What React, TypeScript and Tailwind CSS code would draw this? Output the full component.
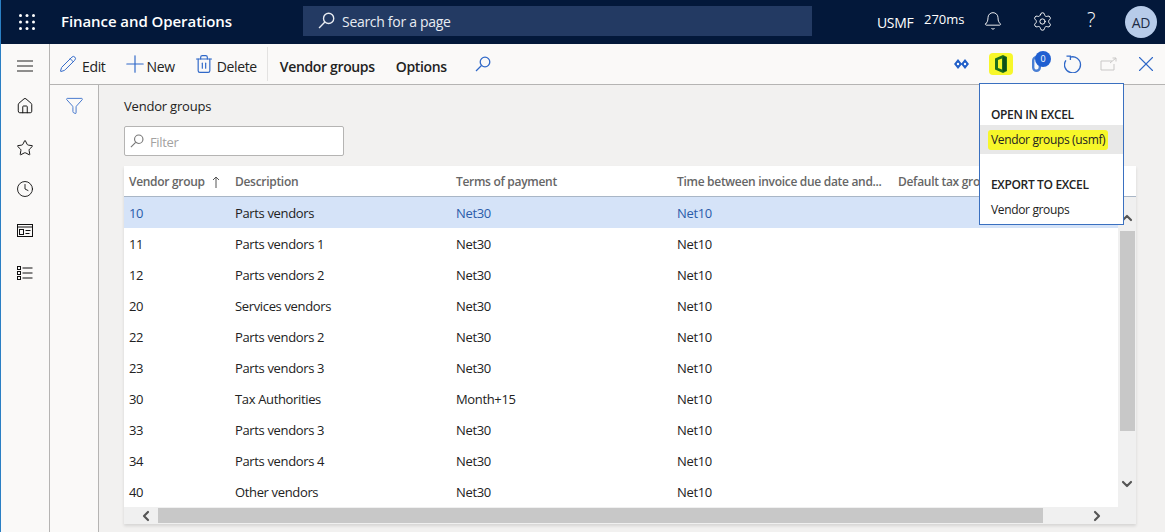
import React from "react";
import { ChevronUp, ChevronDown, ChevronLeft, ChevronRight, Star, Clock, Bell, Settings, Home, Filter, Pencil, Plus, Trash2, X } from "lucide-react";

const rows = [
  ["10", "Parts vendors", "Net30", "Net10"],
  ["11", "Parts vendors 1", "Net30", "Net10"],
  ["12", "Parts vendors 2", "Net30", "Net10"],
  ["20", "Services vendors", "Net30", "Net10"],
  ["22", "Parts vendors 2", "Net30", "Net10"],
  ["23", "Parts vendors 3", "Net30", "Net10"],
  ["30", "Tax Authorities", "Month+15", "Net10"],
  ["33", "Parts vendors 3", "Net30", "Net10"],
  ["34", "Parts vendors 4", "Net30", "Net10"],
  ["40", "Other vendors", "Net30", "Net10"],
];

const font = "[font-family:'Open_Sans',sans-serif]";
const blue = "#2f68c8";

function Waffle() {
  return (
    <svg width="16" height="16" viewBox="0 0 16 16" fill="#fff">
      {[1.5, 8, 14.5].map((y) => [1.5, 8, 14.5].map((x) => <circle key={`${x}-${y}`} cx={x} cy={y} r="1.5" />))}
    </svg>
  );
}

function Lens({ size, color, sw = 1.3 }: { size: number; color: string; sw?: number }) {
  return (
    <svg width={size} height={size} viewBox="0 0 16 16" fill="none" stroke={color} strokeWidth={sw}>
      <circle cx="10" cy="6" r="4.8" />
      <path d="M6.5 9.5 L1 15" />
    </svg>
  );
}

function Cell({ w, children, cls = "" }: { w: string; children: React.ReactNode; cls?: string }) {
  return <div className={`${w} shrink-0 pl-[5px] truncate ${cls}`}>{children}</div>;
}

export default function App() {
  return (
    <div className={`relative w-[1165px] h-[532px] overflow-hidden flex flex-col bg-[#f2f1f0] text-[13px] text-[#222] border-l border-l-[#2a7fc4] ${font} tracking-[-0.35px]`}>
      {/* Top bar */}
      <header className="h-[44px] shrink-0 bg-[#03183a] text-white flex items-center">
        <div className="w-[50px] flex justify-center pl-[1px]"><Waffle /></div>
        <div className="w-[252px] pl-[10px] mt-[-2px] text-[15px] font-semibold tracking-[-0.07px]">Finance and Operations</div>
        <div className="w-[509px] h-[30px] bg-[#233a63] flex items-center pl-[15px] gap-[7px] text-[14px] mt-[-3px] text-[#e8ecf2] tracking-[-0.3px]">
          <Lens size={17} color="#e8ecf2" />
          <span className="pt-[2px]">Search for a page</span>
        </div>
        <div className="flex items-center ml-[65px]">
          <span className="text-[14px] w-[47px]">USMF</span>
          <span className="text-[13px] w-[59px] mt-[-4px] tracking-[0px]">270ms</span>
          <Bell size={20} strokeWidth={1.1} className="mt-[-2px]" />
          <Settings size={21} strokeWidth={1.1} className="ml-[29px] mt-[-2px]" />
          <span className="ml-[30px] mt-[-4px] w-[16px] text-center text-[20px] font-light">?</span>
          <div className="ml-[26px] w-[32px] h-[32px] rounded-full bg-[#b7cbe9] text-[#1d2b45] text-[14px] flex items-center justify-center">AD</div>
        </div>
      </header>

      <div className="flex-1 flex min-h-0">
        {/* Nav rail */}
        <nav className="w-[49px] shrink-0 bg-[#faf9f8] border-r border-r-[#b5b4b3] flex flex-col items-center pt-[16px] text-[#111]">
          <svg width="18" height="12" viewBox="0 0 18 12" stroke="#222" strokeWidth="1"><path d="M1 1h16M1 6h16M1 11h16" /></svg>
          <Home size={18} strokeWidth={1.3} className="mt-[25px]" />
          <Star size={18} strokeWidth={1.3} className="mt-[24px]" />
          <Clock size={18} strokeWidth={1.2} className="mt-[23px]" />
          <svg width="16" height="14" viewBox="0 0 16 14" fill="none" stroke="#111" strokeWidth="1" className="mt-[26px]">
            <rect x="0.5" y="0.5" width="15" height="12" />
            <path d="M0.5 3h15" />
            <rect x="2.5" y="5.5" width="4" height="5" />
            <path d="M8.5 6.5h5M8.5 9.5h4" />
          </svg>
          <svg width="16" height="14" viewBox="0 0 16 14" fill="none" stroke="#111" strokeWidth="1" className="mt-[28px]">
            <rect x="0.5" y="0.5" width="3" height="3" />
            <rect x="0.5" y="5.5" width="3" height="3" />
            <rect x="0.5" y="10.5" width="3" height="3" />
            <path d="M5.5 2h10M5.5 7h10M5.5 12h10" />
          </svg>
        </nav>

        <div className="flex-1 flex flex-col min-w-0">
          {/* Toolbar */}
          <div className="h-[41px] shrink-0 bg-[#faf9f8] border-b border-b-[#b5b4b3] flex items-center text-[14px]">
            <div className="flex items-center h-[34px] border-r border-r-[#e3e2e1] pr-[10px] pl-[9px]">
              <Pencil size={18} strokeWidth={1.3} color={blue} />
              <span className="ml-[5px] mt-[4px]">Edit</span>
              <Plus size={28} strokeWidth={1} color={blue} className="ml-[16px]" />
              <span className="ml-[-3px] mt-[4px]">New</span>
              <Trash2 size={20} strokeWidth={1.4} color={blue} className="ml-[19px]" />
              <span className="ml-[3px] mt-[4px]">Delete</span>
            </div>
            <span className="ml-[12px] mt-[4px] font-semibold">Vendor groups</span>
            <span className="ml-[21px] mt-[4px] font-semibold">Options</span>
            <span className="ml-[28px]"><Lens size={16} color={blue} /></span>
            <div className="ml-auto flex items-center">
              <svg width="15" height="10" viewBox="0 0 15 10" fill="#2260c8">
                <path d="M4 0l4 5-4 5-4-5zM11 0l4 5-4 5-4-5z" />
                <circle cx="4" cy="5" r="1.2" fill="#fff" /><circle cx="11" cy="5" r="1.2" fill="#fff" />
              </svg>
              <div className="ml-[20px] w-[24px] h-[22px] bg-[#f7f72a] rounded-[4px] flex items-center justify-center">
                <svg width="14" height="18" viewBox="0 0 14 18">
                  <path d="M1 3.5l8-3.5 4 2v14l-4 2-8-3.5z" fill="#1c6e1c" />
                  <path d="M4 5l4-1.5v11L4 13z" fill="#f7f72a" />
                  <path d="M9 1.5l3 1v13l-3 1z" fill="#0f4f18" />
                </svg>
              </div>
              <div className="relative ml-[16px] w-[14px] h-[20px] flex items-center justify-center">
                <svg width="9" height="16" viewBox="0 0 9 16" fill="none" stroke="#4a7fd4" strokeWidth="2.4">
                  <rect x="1.2" y="1.2" width="6.6" height="13.6" rx="3.3" />
                </svg>
                <span className="absolute left-[6px] top-[-3px] w-[16px] h-[16px] rounded-full bg-[#1f5fd1] text-white text-[9px] flex items-center justify-center">0</span>
              </div>
              <svg width="18" height="18" viewBox="0 0 18 18" fill="none" stroke={blue} strokeWidth="1.3" className="ml-[21px]">
                <path d="M6 2.2A8 8 0 1 1 1.9 5.3" />
                <path d="M2.5 1.2h3.9v3.9" />
              </svg>
              <svg width="18" height="14" viewBox="0 0 18 14" fill="none" stroke="#c9c8c7" strokeWidth="1" className="ml-[18px]">
                <path d="M12 4H1v9h13V7" /><path d="M10 6l6-5M12.5 1H16v3.5" />
              </svg>
              <X size={26} strokeWidth={1} color={blue} className="ml-[15px] mr-[6px]" />
            </div>
          </div>

          <div className="flex-1 flex min-h-0">
            {/* Filter pane */}
            <div className="w-[49px] shrink-0 bg-[#faf9f8] border-r border-r-[#b5b4b3] flex justify-center pt-[11px]">
              <Filter size={19} strokeWidth={1.1} color={blue} />
            </div>

            {/* Content */}
            <main className="flex-1 pl-[25px] flex flex-col min-w-0">
              <div className="h-[41px] pt-[12px] text-[13px] leading-[18px] tracking-[-0.2px]">Vendor groups</div>
              <div className="w-[220px] h-[30px] bg-white border border-[#b5b4b3] rounded-[2px] flex items-center pl-[5px] gap-[6px] text-[#a3a2a1] text-[13px]">
                <Lens size={14} color="#777" />
                <span className="pt-[3px]">Filter</span>
              </div>

              <div className="mt-[10px] w-[1012px] shadow-[0_2px_3px_rgba(0,0,0,0.12)]">
                <div className="h-[31px] pt-[2px] bg-white border-b border-b-[#a9b6c6] flex items-center text-[12px] font-semibold text-[#666] tracking-[-0.3px]">
                  <Cell w="w-[106px]">
                    <span className="flex items-center">
                      Vendor group
                      <svg width="8" height="12" viewBox="0 0 8 12" fill="none" stroke="#555" strokeWidth="1" className="ml-[7px]">
                        <path d="M4 12V1M1 4l3-3 3 3" />
                      </svg>
                    </span>
                  </Cell>
                  <Cell w="w-[221px]">Description</Cell>
                  <Cell w="w-[221px]">Terms of payment</Cell>
                  <Cell w="w-[221px]">Time between invoice due date and...</Cell>
                  <Cell w="w-[150px]">Default tax group</Cell>
                </div>
                <div className="flex">
                  <div className="w-[994px] shrink-0">
                    {rows.map((r, i) => (
                      <div key={r[0]} className={`h-[31px] pt-[2px] flex items-center ${i === 0 ? "bg-[#d5e3f8]" : "bg-white"}`}>
                        <Cell w="w-[106px]" cls={i === 0 ? "text-[#2a5caa]" : ""}>{r[0]}</Cell>
                        <Cell w="w-[221px]">{r[1]}</Cell>
                        <Cell w="w-[221px]" cls={i === 0 ? "text-[#2a5caa]" : ""}>{r[2]}</Cell>
                        <Cell w="w-[221px]" cls={i === 0 ? "text-[#2a5caa]" : ""}>{r[3]}</Cell>
                      </div>
                    ))}
                  </div>
                  <div className="w-[18px] h-[310px] bg-[#f0f0f0] flex flex-col items-center pt-[13px]">
                    <ChevronUp size={16} strokeWidth={3.2} color="#555" />
                    <div className="w-[15px] h-[200px] bg-[#c8c8c8] mt-[5px] shrink-0" />
                    <ChevronDown size={16} strokeWidth={3.2} color="#555" className="mt-[45px]" />
                  </div>
                </div>
                <div className="h-[17px] bg-[#f0f0f0] flex items-center">
                  <div className="w-[34px] pl-[14px]"><ChevronLeft size={16} strokeWidth={3.2} color="#555" /></div>
                  <div className="w-[885px] h-[15px] bg-[#c8c8c8]" />
                  <div className="ml-[46px]"><ChevronRight size={16} strokeWidth={3.2} color="#555" /></div>
                </div>
              </div>
            </main>
          </div>
        </div>
      </div>

      {/* Excel menu */}
      <div className="absolute left-[978px] top-[83px] w-[145px] h-[142px] bg-white border border-[#3a70c0] flex flex-col text-[12px] pt-[22px]">
        <div className="pl-[11px] h-[18px] leading-[18px] font-semibold text-[12px]">OPEN IN EXCEL</div>
        <div className="mt-[1px] h-[29px] bg-[#e8e8e8] pl-[8px] flex items-center">
          <span className="bg-[#f7f72a] px-[3px] h-[20px] leading-[20px] rounded-[3px]">Vendor groups (usmf)</span>
        </div>
        <div className="mt-[22px] pl-[11px] h-[18px] leading-[18px] font-semibold">EXPORT TO EXCEL</div>
        <div className="mt-[7px] pl-[11px] h-[18px] leading-[18px]">Vendor groups</div>
      </div>
    </div>
  );
}
